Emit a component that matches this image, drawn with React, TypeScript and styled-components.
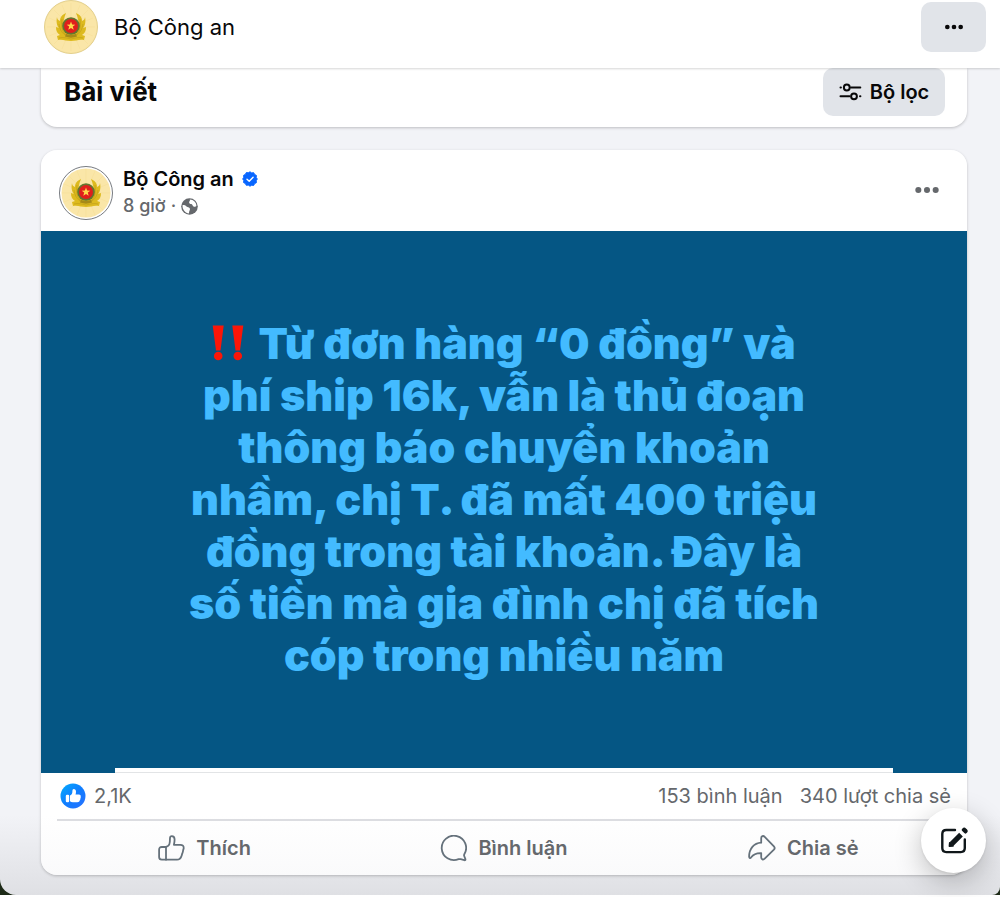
import React from "react";
import styled, { createGlobalStyle } from "styled-components";

const GlobalStyle = createGlobalStyle`
  *, *::before, *::after { box-sizing: border-box; }
  body {
    margin: 0;
    background: #fff;
    color: #080809;
    font-family: Inter, "Noto Sans", sans-serif;
  }
  button { font: inherit; color: inherit; border: 0; background: none; padding: 0; cursor: pointer; }
  h1, h2, h3, p { margin: 0; }
  a { color: inherit; text-decoration: none; }
  svg { display: block; flex: none; }
`;

const Backdrop = styled.div`
  background: #1d2a17;
`;

const Page = styled.div`
  background: linear-gradient(to top, #dfe0e4 0, #f2f3f7 80px);
  border-radius: 0 0 8px 16px;
  padding-bottom: 20px;
`;

const TopBar = styled.header`
  position: relative;
  display: flex;
  align-items: flex-start;
  justify-content: space-between;
  height: 68px;
  padding: 0 14px 0 44px;
  background: #fff;
  box-shadow: 0 1px 2px rgba(0, 0, 0, 0.16);
`;

const Identity = styled.a`
  display: flex;
  align-items: center;
  gap: 16px;
  font-size: 22px;
  line-height: 28px;
`;

const SoftButton = styled.button<{ $wide?: boolean }>`
  display: flex;
  align-items: center;
  justify-content: center;
  gap: 8px;
  width: ${(p) => (p.$wide ? 122 : 65)}px;
  height: ${(p) => (p.$wide ? 48 : 50)}px;
  border-radius: 10px;
  background: #e1e4e9;
  font-size: 20px;
  font-weight: 600;
  line-height: 24px;
`;

const TopMenu = styled.div`
  padding-top: 2px;
`;

const Feed = styled.main`
  display: flex;
  flex-direction: column;
  gap: 23px;
  padding: 0 33px 0 41px;
`;

const Card = styled.section<{ $attached?: boolean }>`
  background: ${(p) => (p.$attached ? "#fff" : "linear-gradient(to top, #fafafb 0, #fff 60px)")};
  border-radius: ${(p) => (p.$attached ? "0 0 16px 16px" : "16px")};
  box-shadow: 0 1px 3px rgba(0, 0, 0, 0.22);
`;

const FeedHeading = styled.div`
  display: flex;
  align-items: center;
  justify-content: space-between;
  padding: 0 22px 11px 23px;
`;

const FeedTitle = styled.h1`
  font-size: 26px;
  font-weight: 700;
  line-height: 32px;
`;

const PostHeader = styled.header`
  display: flex;
  align-items: center;
  gap: 10px;
  height: 81px;
  padding: 5px 27px 0 18px;
`;

const PostMeta = styled.div`
  flex: 1;
`;

const PostMenu = styled.button`
  padding-bottom: 6px;
`;

const Author = styled.h2`
  display: flex;
  align-items: center;
  gap: 8px;
  font-size: 20px;
  font-weight: 600;
  line-height: 26px;
`;

const Timestamp = styled.p`
  display: flex;
  align-items: center;
  gap: 5px;
  color: #65686c;
  font-size: 18px;
  font-weight: 500;
  line-height: 28px;
`;

const Banner = styled.div`
  display: flex;
  flex-direction: column;
  height: 542px;
  background: #055684;
`;

const BannerText = styled.p`
  flex: 1;
  padding-top: 86px;
  color: #43bbff;
  font-size: 43px;
  font-weight: 900;
  line-height: 52px;
  text-align: center;
  white-space: nowrap;
`;

const Line = styled.span`
  display: flex;
  align-items: center;
  justify-content: center;
  gap: 14px;
`;

const BannerStrip = styled.div`
  height: 5px;
  margin: 0 8%;
  background: #fff;
  border-bottom: 1px solid #e2e4e6;
`;

const Stats = styled.div`
  display: flex;
  align-items: center;
  gap: 17px;
  height: 48px;
  margin: 0 16px;
  padding-left: 3px;
  border-bottom: 2px solid #dcdde1;
  color: #65686c;
  font-size: 20px;
  line-height: 26px;
`;

const Reactions = styled.button`
  display: flex;
  align-items: center;
  gap: 8px;
  margin-right: auto;
`;

const Actions = styled.div`
  display: grid;
  grid-template-columns: repeat(3, 1fr);
  gap: 4px;
  height: 54px;
  padding: 0 16px;
`;

const Action = styled.button`
  display: flex;
  align-items: center;
  justify-content: center;
  gap: 11px;
  color: #65686c;
  font-size: 20px;
  font-weight: 600;
  line-height: 24px;
`;

const Compose = styled.button`
  position: fixed;
  right: 14px;
  bottom: 24px;
  display: grid;
  place-items: center;
  width: 65px;
  height: 65px;
  border-radius: 50%;
  background: #fff;
  box-shadow: 0 8px 28px rgba(0, 0, 0, 0.24), 0 1px 3px rgba(0, 0, 0, 0.1);
`;

function Emblem({ ring = false }: { ring?: boolean }) {
  return (
    <svg width="54" height="54" viewBox="0 0 54 54" aria-hidden="true">
      <circle cx="27" cy="27" r="26.5" fill={ring ? "#fff" : "#f8e4a2"} stroke={ring ? "#777b80" : "#e3cf8e"} />
      <circle cx="27" cy="27" r={ring ? 24.5 : 25.5} fill="#fae6a8" />
      <g stroke="#f6df99" strokeWidth="0.6">
        <path d="M27 3v48M3 27h48M10 10l34 34M44 10L10 44M18 5l18 44M36 5L18 49M5 18l44 18M49 18L5 36" />
      </g>
      <g fill="#ddba1e">
        <path d="M22 13c-4 2-6 4-6 8-2-1-3-2-3-4-1 5 0 9 2 11l-3-1c0 4 1 6 4 8l-3 1 1 4c5-1 8 1 13 1V30l-7-3c-1-5 0-9 2-14z" />
        <path d="M32 13c4 2 6 4 6 8 2-1 3-2 3-4 1 5 0 9-2 11l3-1c0 4-1 6-4 8l3 1-1 4c-5-1-8 1-13 1V30l7-3c1-5 0-9-2-14z" />
      </g>
      <path d="M18 19c-1 8 0 13 5 17M36 19c1 8 0 13-5 17M15 24c1 5 2 8 6 11M39 24c-1 5-2 8-6 11M15 38c4-1 8 0 12 1 4-1 8-2 12-1" fill="none" stroke="#c4a21a" strokeWidth="0.8" />
      <circle cx="27" cy="26" r="8.8" fill="#64752f" />
      <circle cx="27" cy="26" r="7" fill="#e01f1c" />
      <path d="M27 21.600l1.100 3 3.200.1-2.500 1.900.9 3.100-2.700-1.800-2.700 1.800.9-3.100-2.500-1.900 3.200-.1z" fill="#ffd94a" />
      <path d="M22 33.500c3 2 7 2 10 0l1 3c-4 1.500-8 1.500-12 0z" fill="#a68a18" />
    </svg>
  );
}

function Dots({ size, color }: { size: number; color: string }) {
  return (
    <svg width={size} height={size} viewBox="0 0 24 24" fill={color} aria-hidden="true">
      <circle cx="4" cy="12" r="2.800" />
      <circle cx="12" cy="12" r="2.800" />
      <circle cx="20" cy="12" r="2.800" />
    </svg>
  );
}

function FilterIcon() {
  return (
    <svg width="23" height="18" viewBox="0 0 23 18" fill="none" stroke="#080809" strokeWidth="2" strokeLinecap="round" aria-hidden="true">
      <path d="M1.500 4.500h.4M12 4.500h9.300M1.500 13.300h9M21 13.300h.4" />
      <circle cx="7.800" cy="4.500" r="2.900" />
      <circle cx="15" cy="13.300" r="2.900" />
    </svg>
  );
}

function VerifiedIcon() {
  return (
    <svg width="16" height="16" viewBox="0 0 16 16" aria-label="Đã xác minh" role="img">
      <path
        fill="#0866ff"
        stroke="#0866ff"
        strokeLinejoin="round"
        d="M8 .8l1.7 1.1 2-.2.9 1.8 1.8.9-.2 2L15.300 8l-1.100 1.700.2 2-1.800.9-.9 1.800-2-.2L8 15.200l-1.700-1.100-2 .2-.9-1.800-1.800-.9.2-2L.700 8l1.100-1.700-.2-2 1.800-.9.9-1.800 2 .2z"
      />
      <path d="M5 8.200l2.200 2.100 3.900-4" fill="none" stroke="#fff" strokeWidth="1.400" strokeLinecap="round" strokeLinejoin="round" />
    </svg>
  );
}

function GlobeIcon() {
  return (
    <svg width="17" height="17" viewBox="0 0 17 17" aria-label="Công khai" role="img">
      <circle cx="8.500" cy="8.500" r="8.300" fill="#65686c" />
      <path fill="#fff" d="M8.800 1.500c2 0 3.500.8 4.700 2 1.200 1.300 1.900 2.800 1.900 4.600-.8 1-2.200.9-3.200.1-.9-.8-.9-1.800-2-2.100-1.200-.2-2.200-.7-2.100-1.900.1-1 1.300-1.600.7-2.700zM1.500 7.300c1.400-.5 2.700-.1 3.800.9.700.7 1.700.7 2.600 1.200 1.100.7 1.400 1.700.8 2.800-.6 1-.5 2-.8 3.200-3.300-.2-6.600-3.300-6.400-8.100z" />
    </svg>
  );
}

function LikeIcon() {
  return (
    <svg width="27" height="26" viewBox="0 0 27 26" fill="none" stroke="#65717b" strokeWidth="1.800" strokeLinejoin="round" strokeLinecap="round" aria-hidden="true">
      <path d="M8 12l2.200-1.300c1.200-.8 1.500-2 1.600-3.700l.2-4c.1-1.200.7-1.900 1.700-1.900 1.700 0 2.900 1.400 2.900 3.400 0 1.900-.3 3.500-.7 5.300h6.500c2.100 0 3.500 1.400 3.300 3.300-.1 1-.5 1.500-.6 2.400-.1 1.400-.300 1.800-.8 2.900-.4 1-.4 1.600-.8 2.600-.8 2.500-2.200 3.700-4.500 3.700H8z" />
      <path d="M8 12H3.800c-1.700 0-2.700 1-2.700 2.700V22c0 1.700 1 2.700 2.700 2.700H8" />
    </svg>
  );
}

function CommentIcon() {
  return (
    <svg width="27" height="27" viewBox="0 0 27 27" fill="none" stroke="#65717b" strokeWidth="1.800" strokeLinejoin="round" strokeLinecap="round" aria-hidden="true">
      <path d="M24.200 19.500A12.200 12.200 0 1 0 18.600 24.200c.8-.3 1.400-.2 2.100 0l3.600 1c.8.200 1.300-.3 1.100-1.100l-1.200-3.100c-.2-.5-.2-1 0-1.500z" />
    </svg>
  );
}

function ShareIcon() {
  return (
    <svg width="28" height="26" viewBox="0 0 28 26" fill="none" stroke="#65717b" strokeWidth="1.800" strokeLinejoin="round" strokeLinecap="round" aria-hidden="true">
      <path d="M13.200 7.700V3.200c0-2.100 2-2.900 3.500-1.400l9.200 9.500c1 1.100 1 2.300 0 3.400l-9.200 9c-1.500 1.500-3.500.7-3.500-1.400v-4.200c-4.500-.2-7.600.8-10 4.200-.9 1.300-2.100.9-2.100-.7.100-8 4.600-13.400 12.100-13.900z" />
    </svg>
  );
}

function ReactionBadge() {
  return (
    <svg width="26" height="26" viewBox="0 0 26 26" aria-hidden="true">
      <defs>
        <linearGradient id="likeFill" x1="0" y1="0" x2="1" y2="1">
          <stop offset="0" stopColor="#02adfc" />
          <stop offset="0.500" stopColor="#0f7dff" />
          <stop offset="1" stopColor="#2a71ff" />
        </linearGradient>
      </defs>
      <circle cx="13" cy="13" r="12.500" fill="url(#likeFill)" />
      <rect x="5.800" y="11.800" width="3.400" height="7.400" rx="1.200" fill="#fff" />
      <path fill="#fff" d="M10 12.600c2-1.200 2.400-2.600 2.400-4.700 0-1.100.6-1.900 1.400-1.900 1.300 0 2.200 1 2.200 2.700 0 1-.2 1.800-.5 2.700h3.300c1.600 0 2.300 1.200 1.900 2.400.2.600.1 1.300-.3 1.800.1.700-.1 1.300-.6 1.700-.1 1.300-1.100 1.900-2.500 1.900h-4.500c-1.100 0-2-.3-2.800-.9z" />
    </svg>
  );
}

function ComposeIcon() {
  return (
    <svg width="28" height="28" viewBox="0 0 28 28" fill="none" stroke="#10171a" strokeWidth="2.400" strokeLinecap="round" aria-hidden="true">
      <path d="M15 3H6.300C3.700 3 2.300 4.400 2.300 7v14.100c0 2.600 1.400 4 4 4h14.500c2.600 0 4-1.400 4-4v-8.600" />
      <path d="M11.500 17.200L21 7.700" strokeWidth="5.200" strokeLinecap="butt" />
      <path d="M9.400 19.300l.3-3.600 3.300 3.300-3.600.3z" fill="#10171a" strokeWidth="1.600" strokeLinejoin="round" />
      <path d="M24.200 3.200l.9.900" strokeWidth="5" />
      <path d="M20.800 3.500l4 4" stroke="#fff" strokeWidth="1.200" strokeLinecap="butt" />
    </svg>
  );
}

function DoubleExclamation() {
  return (
    <svg width="32" height="36" viewBox="0 0 32 36" fill="#fb1608" role="img" aria-label="Chú ý">
      <path d="M.700.500h11L8.500 25.500H4zM20.300.500h11L28 25.500h-4.500z" />
      <circle cx="6.200" cy="31" r="4.300" />
      <circle cx="25.800" cy="31" r="4.300" />
    </svg>
  );
}

const bannerLines = [
  "phí ship 16k, vẫn là thủ đoạn",
  "thông báo chuyển khoản",
  "nhầm, chị T. đã mất 400 triệu",
  "đồng trong tài khoản. Đây là",
  "số tiền mà gia đình chị đã tích",
  "cóp trong nhiều năm",
];

export default function App() {
  return (
    <>
      <GlobalStyle />
      <Backdrop>
        <Page>
          <TopBar>
            <Identity href="#">
              <Emblem />
              Bộ Công an
            </Identity>
            <TopMenu>
              <SoftButton aria-label="Tùy chọn trang">
                <Dots size={20} color="#080809" />
              </SoftButton>
            </TopMenu>
          </TopBar>
          <Feed>
            <Card $attached>
              <FeedHeading>
                <FeedTitle>Bài viết</FeedTitle>
                <SoftButton $wide>
                  <FilterIcon />
                  Bộ lọc
                </SoftButton>
              </FeedHeading>
            </Card>
            <Card>
              <PostHeader>
                <Emblem ring />
                <PostMeta>
                  <Author>
                    <a href="#">Bộ Công an</a>
                    <VerifiedIcon />
                  </Author>
                  <Timestamp>
                    <a href="#">8 giờ</a>·<GlobeIcon />
                  </Timestamp>
                </PostMeta>
                <PostMenu aria-label="Tùy chọn bài viết">
                  <Dots size={26} color="#65686c" />
                </PostMenu>
              </PostHeader>
              <Banner>
                <BannerText>
                  <Line>
                    <DoubleExclamation />
                    Từ đơn hàng “0 đồng” và
                  </Line>
                  {bannerLines.map((line) => (
                    <Line key={line}>{line}</Line>
                  ))}
                </BannerText>
                <BannerStrip />
              </Banner>
              <Stats>
                <Reactions>
                  <ReactionBadge />
                  2,1K
                </Reactions>
                <button>153 bình luận</button>
                <button>340 lượt chia sẻ</button>
              </Stats>
              <Actions>
                <Action>
                  <LikeIcon />
                  Thích
                </Action>
                <Action>
                  <CommentIcon />
                  Bình luận
                </Action>
                <Action>
                  <ShareIcon />
                  Chia sẻ
                </Action>
              </Actions>
            </Card>
          </Feed>
        </Page>
      </Backdrop>
      <Compose aria-label="Tạo bài viết">
        <ComposeIcon />
      </Compose>
    </>
  );
}
